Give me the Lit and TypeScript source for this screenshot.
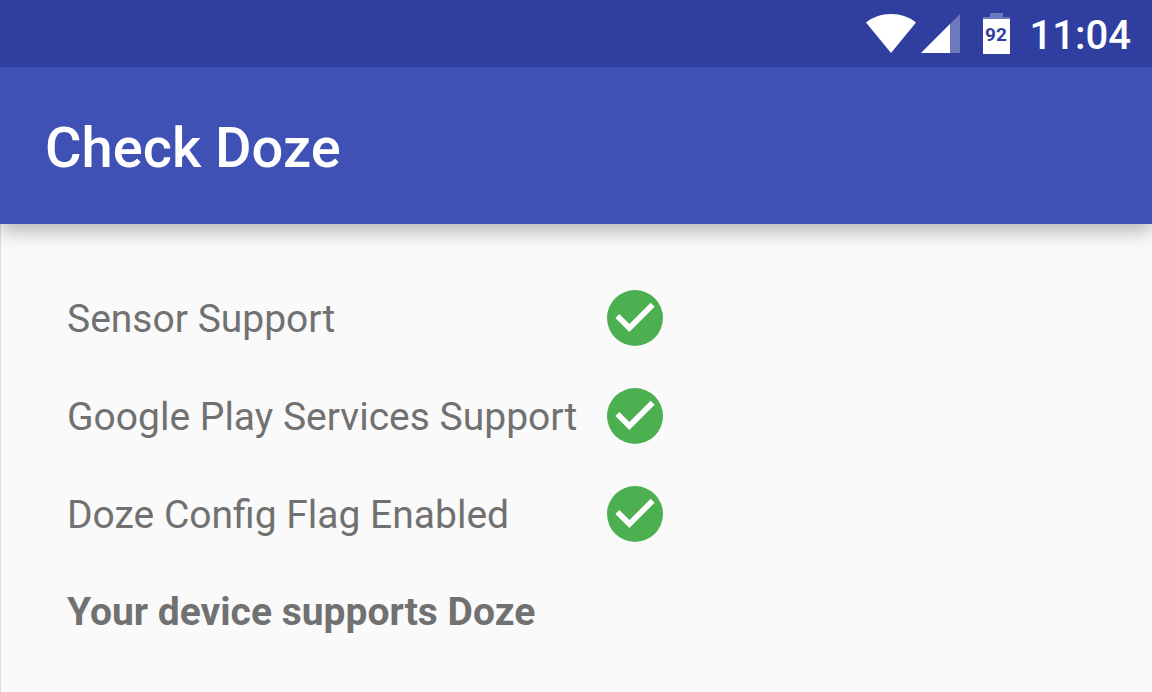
import { LitElement, html, css } from "lit";
import { customElement } from "lit/decorators.js";

@customElement("status-bar")
export class StatusBar extends LitElement {
  static styles = css`
    :host {
      position: relative;
      z-index: 1;
      display: flex;
      align-items: center;
      justify-content: flex-end;
      height: 67px;
      box-sizing: border-box;
      padding: 0 21px 0 0;
      background: #303f9f;
      color: #fff;
      font: 500 40px/48px Roboto, sans-serif;
    }
    svg {
      display: block;
    }
    .signal {
      margin-left: 5px;
    }
    .battery {
      margin: 0 20px 0 23px;
    }
    .level {
      font: 700 19px Roboto, sans-serif;
      fill: #303f9f;
    }
    time {
      padding-top: 4px;
    }
  `;

  render() {
    return html`
      <svg width="50" height="40" viewBox="0 0 50 40" role="img" aria-label="Wi-Fi">
        <path d="M0 8.500C7 3 15 0 25 0S43 3 50 8.500L25 39Z" fill="#fff" />
      </svg>
      <svg class="signal" width="39" height="40" viewBox="0 0 39 40" role="img" aria-label="Signal">
        <path d="M39 0V39H0Z" fill="#fff" fill-opacity=".3" />
        <path d="M29 10V39H0Z" fill="#fff" />
      </svg>
      <svg class="battery" width="27" height="41" viewBox="0 0 27 41" role="img" aria-label="Battery">
        <path d="M7 0h13v4h7v3H0V4h7z" fill="#fff" fill-opacity=".3" />
        <path d="M0 6h27v35H0z" fill="#fff" />
        <text class="level" x="13" y="28" text-anchor="middle">92</text>
      </svg>
      <time>11:04</time>
    `;
  }
}

@customElement("app-root")
export class AppRoot extends LitElement {
  static styles = css`
    :host {
      display: flex;
      flex-direction: column;
      min-height: 100vh;
      background: #fafafa;
      color: #717171;
      font-family: Roboto, sans-serif;
    }
    .toolbar {
      position: relative;
      display: flex;
      align-items: center;
      height: 157px;
      box-sizing: border-box;
      padding: 4px 45px 0;
      background: #3f51b5;
      color: #fff;
      box-shadow: 0 7px 18px rgba(0, 0, 0, 0.28);
    }
    h1 {
      margin: 0;
      font: 500 56px/64px Roboto, sans-serif;
    }
    main {
      flex: 1;
      padding: 45px 66px 0;
      border-left: 1px solid #dcdcdc;
      font-size: 39px;
      line-height: 95px;
    }
    ul {
      display: inline-grid;
      grid-template-columns: auto auto;
      column-gap: 30px;
      margin: 0;
      padding: 0;
      list-style: none;
      vertical-align: top;
    }
    li {
      display: contents;
    }
    svg {
      align-self: center;
    }
    span,
    p {
      margin: 0;
      padding-top: 3px;
    }
    p {
      padding-top: 2px;
      font-weight: 700;
    }
  `;

  private checks = ["Sensor Support", "Google Play Services Support", "Doze Config Flag Enabled"];

  render() {
    return html`
      <status-bar></status-bar>
      <header class="toolbar"><h1>Check Doze</h1></header>
      <main>
        <ul>
          ${this.checks.map(
            (label) => html`
              <li>
                <span>${label}</span>
                <svg width="56" height="56" viewBox="2 2 20 20" role="img" aria-label="Supported">
                  <circle cx="12" cy="12" r="10" fill="#4caf50" />
                  <path d="M10 17l-5-5 1.410-1.410L10 14.170l7.590-7.590L19 8z" fill="#fff" />
                </svg>
              </li>
            `
          )}
        </ul>
        <p>Your device supports Doze</p>
      </main>
    `;
  }
}
